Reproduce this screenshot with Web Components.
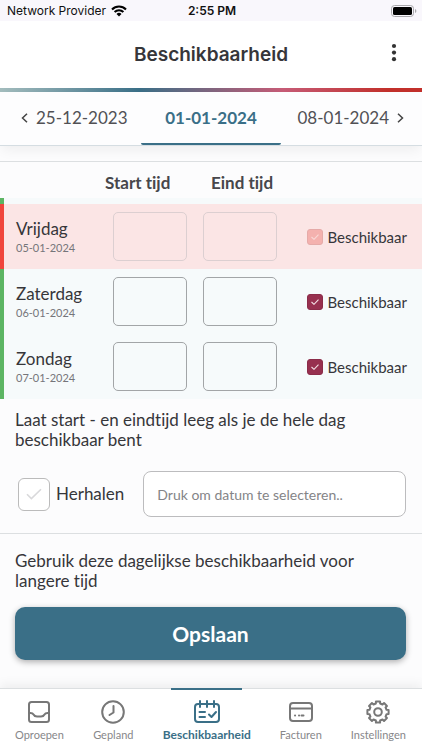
<!DOCTYPE html>
<html lang="nl">
<head>
<meta charset="utf-8">
<meta name="viewport" content="width=device-width, initial-scale=1">
<title>Beschikbaarheid</title>
<style>
  :root {
    --primary: #3a6f87;
    --accent: #97304f;
    --ink: #36363a;
    --muted: #848487;
    --line: #dcdfe1;
    --body-font: Lato, "Open Sans", sans-serif;
    --system-font: Inter, Roboto, sans-serif;
  }

  body {
    margin: 0;
    background: #fcfcfd;
    color: var(--ink);
    font: 17px/20px var(--body-font);
    font-variant-ligatures: none;
  }
</style>
</head>
<body>
<availability-app>
  <status-bar slot="top" provider="Network Provider" time="2:55 PM"></status-bar>
  <page-header slot="top">Beschikbaarheid</page-header>
  <week-tabs slot="top" previous="25-12-2023" current="01-01-2024" next="08-01-2024"></week-tabs>
  <day-table></day-table>
  <hint-text>Laat start - en eindtijd leeg als je de hele dag beschikbaar bent</hint-text>
  <repeat-field label="Herhalen" placeholder="Druk om datum te selecteren.."></repeat-field>
  <hint-text>Gebruik deze dagelijkse beschikbaarheid voor langere tijd</hint-text>
  <save-button>Opslaan</save-button>
  <bottom-nav slot="bottom">
    <nav-item icon="inbox">Oproepen</nav-item>
    <nav-item icon="clock">Gepland</nav-item>
    <nav-item icon="calendar" active>Beschikbaarheid</nav-item>
    <nav-item icon="card">Facturen</nav-item>
    <nav-item icon="gear">Instellingen</nav-item>
  </bottom-nav>
</availability-app>

<script>
class BaseElement extends HTMLElement {
  connectedCallback() {
    if (this.shadowRoot) return;
    this.attachShadow({ mode: "open" });
    const template = document.createElement("template");
    template.innerHTML = `<style>*, ::before, ::after { box-sizing: border-box; }</style>${this.render()}`;
    this.shadowRoot.appendChild(template.content.cloneNode(true));
  }
}

class AvailabilityApp extends BaseElement {
  render() {
    return /* html */`
      <style>
        :host { display: flex; flex-direction: column; min-height: 100vh; }
        main { flex: 1; }
      </style>
      <slot name="top"></slot>
      <main><slot></slot></main>
      <slot name="bottom"></slot>
    `;
  }
}

class StatusBar extends BaseElement {
  render() {
    return /* html */`
      <style>
        :host {
          display: grid;
          grid-template-columns: 1fr auto 1fr;
          align-items: center;
          height: 21px;
          padding: 0 5px 0 7px;
          background: #f9f7fc;
          color: #111;
          font: 12px/20px var(--system-font);
        }
        .provider { display: flex; align-items: center; gap: 5px; }
        .time { font-weight: 600; }
        .battery { justify-self: end; }
        svg { display: block; }
      </style>
      <span class="provider">${this.getAttribute("provider")}
        <svg width="16" height="12" viewBox="0 0 16 12" fill="none" stroke="#000" stroke-width="2.1">
          <path d="M1 4.4a10 10 0 0 1 14 0M3.6 7.1a6.2 6.2 0 0 1 8.8 0"/>
          <path d="M8 11.4 5.5 8.9a3.6 3.6 0 0 1 5 0z" fill="#000" stroke="none"/>
        </svg>
      </span>
      <span class="time">${this.getAttribute("time")}</span>
      <svg class="battery" width="26" height="12" viewBox="0 0 26 12">
        <rect x=".5" y=".5" width="22" height="11" rx="3" fill="none" stroke="#a9a8ac"/>
        <rect x="2" y="2" width="19" height="8" rx="1.6"/>
        <path d="M24 4v4q1.4-.6 1.4-2T24 4" fill="#a9a8ac"/>
      </svg>
    `;
  }
}

class PageHeader extends BaseElement {
  render() {
    return /* html */`
      <style>
        :host { display: block; background: #fff; }
        header {
          display: grid;
          grid-template-columns: 40px 1fr 40px;
          align-items: center;
          height: 67px;
          padding: 0 8px;
        }
        h1 { margin: 0; font: 600 19px/24px var(--system-font); text-align: center; }
        button { padding: 0 0 4px; border: 0; background: none; }
        svg { display: block; margin: 0 auto; }
        .stripe {
          height: 4px;
          background: linear-gradient(90deg, #a3bcbd, #3a6f87 33%, #c65b76 67%, #c2302b 92%);
        }
      </style>
      <header>
        <span></span>
        <h1><slot></slot></h1>
        <button type="button" aria-label="Meer">
          <svg width="6" height="20" viewBox="0 0 6 20" fill="#333"><circle cx="3" cy="3" r="2.1"/><circle cx="3" cy="9.6" r="2.1"/><circle cx="3" cy="16.2" r="2.1"/></svg>
        </button>
      </header>
      <div class="stripe"></div>
    `;
  }
}

class WeekTabs extends BaseElement {
  render() {
    return /* html */`
      <style>
        :host { display: block; box-shadow: 0 6px 12px -2px #0000000f; }
        nav {
          display: grid;
          grid-template-columns: repeat(3, 1fr);
          height: 54px;
          border-bottom: 1px solid #d5dde2;
          background: #fdfdfe;
        }
        button {
          display: flex;
          align-items: center;
          justify-content: center;
          gap: 8px;
          padding: 0 0 2px;
          border: 0;
          background: none;
          color: #515155;
          font: 17px/20px var(--body-font);
        }
        .previous { justify-content: flex-start; padding-left: 21px; }
        .next { justify-content: flex-end; padding-right: 18px; }
        .current {
          padding: 0;
          border-bottom: 2px solid var(--primary);
          border-radius: 2px;
          color: var(--primary);
          font-weight: 700;
        }
        svg { fill: none; stroke: #444; stroke-width: 1.5; }
      </style>
      <nav>
        <button type="button" class="previous"><svg width="7" height="10" viewBox="0 0 7 10"><path d="M6 .7 1.5 5 6 9.3"/></svg>${this.getAttribute("previous")}</button>
        <button type="button" class="current">${this.getAttribute("current")}</button>
        <button type="button" class="next">${this.getAttribute("next")}<svg width="7" height="10" viewBox="0 0 7 10"><path d="M1 .7 5.5 5 1 9.3"/></svg></button>
      </nav>
    `;
  }
}

const DAYS = [
  { name: "Vrijdag", date: "05-01-2024", past: true },
  { name: "Zaterdag", date: "06-01-2024" },
  { name: "Zondag", date: "07-01-2024" },
];

class DayTable extends BaseElement {
  render() {
    return /* html */`
      <style>
        :host { display: block; margin-top: 15px; border-top: 1px solid var(--line); }
        table { width: 100%; border-collapse: collapse; table-layout: fixed; }
        .name { width: 103px; }
        .time { width: 90px; }
        th, td { padding: 0; text-align: left; }
        thead th { height: 36px; padding-top: 6px; font-weight: 700; color: #47474b; }
        thead th:nth-child(3) { padding-left: 16px; }
        tbody { background: #f6fafb; }
        tbody tr { height: 65px; }
        tbody tr.spacer { height: 6px; }
        tbody tr > :first-child { padding-left: 12px; border-left: 4px solid #5cb563; }
        tbody tr.past > :first-child { border-left-color: #f0453c; }
        tbody th { padding-top: 2px; font-weight: 400; }
        tbody small { display: block; margin-top: 1px; color: #75757a; font-size: 11px; line-height: 16px; }
        .field { padding-left: 8px; }
        input[type="text"] {
          display: block;
          width: 74px;
          height: 49px;
          border: 1px solid #a2a5a7;
          border-radius: 5px;
          background: transparent;
        }
        label {
          display: flex;
          align-items: center;
          justify-content: flex-end;
          gap: 4px;
          padding-right: 15px;
          font-size: 15px;
        }
        input[type="checkbox"] {
          appearance: none;
          width: 16px;
          height: 16px;
          margin: 0;
          border: 1px solid #8b2c49;
          border-radius: 3px;
          background: var(--accent);
        }
        .box { display: grid; }
        .box > * { grid-area: 1 / 1; }
        svg { place-self: center; fill: none; stroke: #f3dfe5; stroke-width: 1.1; }
        .past { background: #fbe5e5; }
        .past input[type="text"] { border-color: #dccfd1; }
        .past input[type="checkbox"] { border-color: #e5aaa8; background: #f4b1ae; }
        .past svg { stroke: #f9d9d7; }
      </style>
      <table>
        <colgroup><col class="name"><col class="time"><col class="time"><col></colgroup>
        <thead><tr><th></th><th>Start tijd</th><th>Eind tijd</th><th></th></tr></thead>
        <tbody>
          <tr class="spacer"><td></td><td colspan="3"></td></tr>
          ${DAYS.map(day => this.row(day)).join("")}
        </tbody>
      </table>
    `;
  }

  row({ name, date, past }) {
    const disabled = past ? "disabled" : "";
    return /* html */`
      <tr class="${past ? "past" : ""}">
        <th scope="row">${name}<small>${date}</small></th>
        <td class="field"><input type="text" aria-label="Start tijd ${name}" ${disabled}></td>
        <td class="field"><input type="text" aria-label="Eind tijd ${name}" ${disabled}></td>
        <td><label><span class="box"><input type="checkbox" checked ${disabled}><svg width="8" height="6" viewBox="0 0 8 6"><path d="M.5 3 3 5.3 7.5.7"/></svg></span>Beschikbaar</label></td>
      </tr>
    `;
  }
}

class HintText extends BaseElement {
  render() {
    return /* html */`
      <style>
        :host { display: block; padding: 11px 15px 16px; }
        p { margin: 0; }
      </style>
      <p><slot></slot></p>
    `;
  }
}

class RepeatField extends BaseElement {
  render() {
    return /* html */`
      <style>
        :host {
          display: flex;
          align-items: center;
          gap: 19px;
          padding: 5px 16px 16px 18px;
          margin-bottom: 6px;
          border-bottom: 1px solid var(--line);
        }
        label { display: flex; flex: none; align-items: center; gap: 6px; }
        .box { display: grid; }
        .box > * { grid-area: 1 / 1; }
        input[type="checkbox"] {
          appearance: none;
          width: 32px;
          height: 33px;
          margin: 0;
          border: 1px solid #bbb;
          border-radius: 6px;
          background: #fff;
        }
        svg { place-self: center; fill: none; stroke: #d9d9db; stroke-width: 1.6; }
        input[type="text"] {
          flex: 1;
          min-width: 0;
          height: 46px;
          padding: 0 13px;
          border: 1px solid #bcbcbe;
          border-radius: 8px;
          background: #fff;
          font: 14px/20px var(--body-font);
        }
        ::placeholder { color: var(--muted); }
      </style>
      <label><span class="box"><input type="checkbox"><svg width="16" height="12" viewBox="0 0 16 12"><path d="M1 6.2 5.4 10.6 15 1.2"/></svg></span>${this.getAttribute("label")}</label>
      <input type="text" aria-label="Einddatum" placeholder="${this.getAttribute("placeholder")}">
    `;
  }
}

class SaveButton extends BaseElement {
  render() {
    return /* html */`
      <style>
        :host { display: block; padding: 0 16px 28px 15px; }
        button {
          width: 100%;
          height: 53px;
          border: 0;
          border-radius: 10px;
          background: var(--primary);
          box-shadow: 0 2px 6px #00000050;
          color: #fff;
          font: 700 21px/24px var(--body-font);
        }
      </style>
      <button type="button"><slot></slot></button>
    `;
  }
}

class BottomNav extends BaseElement {
  render() {
    return /* html */`
      <style>
        :host { display: block; }
        nav {
          display: flex;
          justify-content: space-between;
          height: 62px;
          padding: 0 16px 0 15px;
          border-top: 1px solid var(--line);
          background: #fff;
          box-shadow: 0 -4px 10px #0000000f;
        }
      </style>
      <nav><slot></slot></nav>
    `;
  }
}

// Gear outline with eight teeth around the 24x24 centre
function gearPath() {
  const points = [];
  for (let i = 0; i < 8; i++) {
    for (const [offset, radius] of [[-14, 8.8], [-11, 10.8], [11, 10.8], [14, 8.8]]) {
      const angle = (i * 45 + offset) * Math.PI / 180;
      points.push(`${(12 + radius * Math.sin(angle)).toFixed(2)} ${(12 - radius * Math.cos(angle)).toFixed(2)}`);
    }
  }
  return `M${points.join("L")}Z`;
}

const ICONS = {
  inbox: `<rect x="2" y="2" width="20" height="20" rx="2.5"/><path d="M2 13q3.5-.5 4.5 1.5T10 16.5h4q2.5 0 3.5-2T22 13"/>`,
  clock: `<circle cx="12" cy="12" r="10.8"/><path d="M12.5 6v6.5L8.5 15"/>`,
  calendar: `<rect x="0" y="4" width="24" height="18" rx="3"/><path d="M5 1v6M12 1v6M19 1v6M4.5 12H10M4.5 17H10M14 14.5l2.5 2.5 4.5-5"/>`,
  card: `<rect x="1" y="3" width="22" height="18" rx="3"/><path d="M1 8.5h22M6 15.5h.1M10 15.5h.1M12.5 15.5h2"/>`,
  gear: `<path d="${gearPath()}"/><circle cx="12" cy="12" r="3.8"/>`,
};

class NavItem extends BaseElement {
  render() {
    return /* html */`
      <style>
        :host { display: flex; margin-top: -1px; }
        a {
          display: flex;
          flex-direction: column;
          align-items: center;
          color: #87878a;
          font-size: 11px;
          line-height: 16px;
          text-decoration: none;
        }
        .marker { width: 71px; height: 2px; margin: 0 -15px; }
        svg {
          display: block;
          margin: 10px 0 3px;
          overflow: visible;
          fill: none;
          stroke: #777;
          stroke-width: 2;
          stroke-linecap: round;
          stroke-linejoin: round;
        }
        :host([active]) a { color: var(--primary); font-size: 12px; font-weight: 700; }
        :host([active]) .marker { background: var(--primary); }
        :host([active]) svg { stroke: var(--primary); }
      </style>
      <a href="#${this.getAttribute("icon")}">
        <span class="marker"></span>
        <svg width="24" height="24" viewBox="0 0 24 24">${ICONS[this.getAttribute("icon")]}</svg>
        <slot></slot>
      </a>
    `;
  }
}

customElements.define("availability-app", AvailabilityApp);
customElements.define("status-bar", StatusBar);
customElements.define("page-header", PageHeader);
customElements.define("week-tabs", WeekTabs);
customElements.define("day-table", DayTable);
customElements.define("hint-text", HintText);
customElements.define("repeat-field", RepeatField);
customElements.define("save-button", SaveButton);
customElements.define("bottom-nav", BottomNav);
customElements.define("nav-item", NavItem);
</script>
</body>
</html>
